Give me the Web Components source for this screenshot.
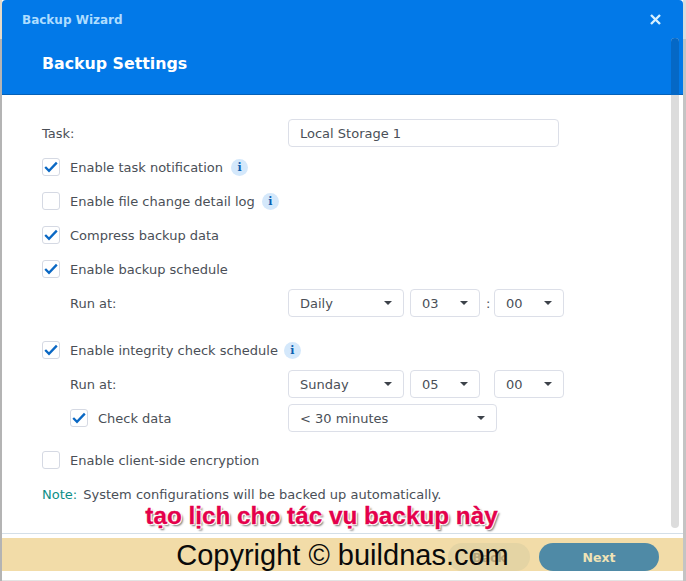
<!DOCTYPE html>
<html lang="en"><head><meta charset="utf-8"><title>Backup Wizard</title>
<style>
html,body{margin:0;padding:0;background:#fff}
body{font-family:"DejaVu Sans",sans-serif;font-size:13px;color:#4a4f57}
</style></head><body>
<template id="t-check"><style>
:host{display:flex;align-items:center;height:28px;gap:10px}
.box{width:16px;height:16px;border:1px solid #d5d9e3;border-radius:3px;background:#fff;flex:none;display:flex;align-items:center;justify-content:center}
.l{display:flex;align-items:center;white-space:pre}
svg{width:14px;height:12px;display:none}
:host([checked]) svg{display:block}
</style><span class="box"><svg viewBox="0 0 14 12"><path d="M1.2 6 5 9.8 12.8 1.6" fill="none" stroke="#0a68c4" stroke-width="2.3"/></svg></span><span class="l"><slot></slot><slot name="extra"></slot></span></template>

<template id="t-info"><style>
:host{display:inline-flex;width:17px;height:17px;border-radius:50%;background:#d4e8fb;color:#0b5fb0;align-items:center;justify-content:center;font:bold 11px "DejaVu Serif",serif}
</style>i</template>

<template id="t-select"><style>
:host{display:flex;box-sizing:border-box;align-items:center;justify-content:space-between;height:28px;border:1px solid #dcdfe8;border-radius:4px;background:#fff;padding:0 11px;font-size:13px;color:#4a4f57}
i{width:0;height:0;border:4.5px solid transparent;border-top:4.5px solid #3d424a;border-bottom:0}
</style><span><slot></slot></span><i></i></template>

<template id="t-input"><style>
:host{display:flex;box-sizing:border-box;align-items:center;height:28px;border:1px solid #dcdfe8;border-radius:4px;background:#fff;padding:0 11px;color:#4a4f57}
</style><slot></slot></template>

<template id="t-header"><style>
:host{display:block;height:95px;box-sizing:border-box;background:#0279e8;border-bottom:1px solid #0561b8;position:relative;border-radius:4px 4px 0 0}
.t{padding:13px 0 0 20px;height:26px;font-weight:bold;font-size:12px;line-height:15px;color:#aeddff}
.h{padding:15px 0 0 40px;font-weight:bold;font-size:15.8px;line-height:20px;color:#fff}
svg{position:absolute;right:22px;top:14px;width:11px;height:11px}
</style><div class="t">Backup Wizard</div><div class="h">Backup Settings</div>
<svg viewBox="0 0 11 11"><path d="M1 1 10 10M10 1 1 10" stroke="#d6f0ff" stroke-width="2.4" fill="none"/></svg></template>

<template id="t-row"><style>
:host{display:grid;grid-template-columns:246px auto;align-items:center;height:28px}
.c{display:flex;align-items:center;gap:6px}
</style><span><slot name="label"></slot></span><span class="c"><slot></slot></span></template>

<template id="t-footer"><style>
:host{display:block;height:47px;box-sizing:border-box;border-top:1px solid #d4dfe8;padding-top:4px;background:#fff}
.band{height:33px;background:#f2dca8;box-sizing:border-box;padding:5px 24px 0 0;display:flex;justify-content:flex-end;gap:9px}
.b{height:28px;border-radius:14px;display:flex;align-items:center;justify-content:center;font-size:12.5px;font-weight:bold}
.back{width:82px;background:#e4d4a4;color:#b5a67d}
.next{width:120px;background:#4f8aa6;color:#efe3b6}
</style><div class="band"><span class="b back">Back</span><span class="b next">Next</span></div></template>

<template id="t-window"><style>
:host{display:block;width:686px;height:581px;position:relative;overflow:hidden;box-sizing:border-box;padding:0 3px 1px 2px;
background:
 linear-gradient(#e6dac8 0 39px,#b4b4b4 39px) left top/2px 100% no-repeat,
 linear-gradient(#dcdcdc 0 39px,#c4c4c4 39px) right top/3px 100% no-repeat,
 linear-gradient(#e3e3e3,#e3e3e3) left bottom/100% 1px no-repeat,
 #fff}
main{height:438px;box-sizing:border-box;padding:24px 40px 0 40px;display:flex;flex-direction:column;gap:6px;background:#fff}
.scroll{position:absolute;right:7px;top:38px;width:8px;height:490px;border-radius:4px;background:#dcdcdc}
.scroll::before{content:"";display:block;height:57px;background:#0568c6;border-radius:4px 4px 0 0}
.over{position:absolute;left:0;right:0;text-align:center;font-family:"Liberation Sans",Arial,sans-serif;white-space:nowrap}
.red{top:500px;left:-43px;font-size:24.3px;font-weight:bold;line-height:32px;color:#e4004b;-webkit-text-stroke:.3px #e4004b;text-shadow:1px 1px 0 #fff,-1px -1px 0 #fff,1px -1px 0 #fff,-1px 1px 0 #fff,2px 2px 2px #777}
.copy{top:538px;left:-1px;font-size:29px;line-height:34px;color:#0a0a0a}
</style><wizard-header></wizard-header><main><slot></slot></main><wizard-footer></wizard-footer>
<div class="scroll"></div>
<div class="over red">tạo lịch cho tác vụ backup này</div>
<div class="over copy">Copyright © buildnas.com</div></template>

<wizard-window>
  <form-row><span slot="label">Task:</span><text-box style="width:271px">Local Storage 1</text-box></form-row>
  <check-row checked>Enable task notification<info-dot slot="extra" style="margin-left:8px"></info-dot></check-row>
  <check-row>Enable file change detail log<info-dot slot="extra" style="margin-left:7px"></info-dot></check-row>
  <check-row checked>Compress backup data</check-row>
  <check-row checked>Enable backup schedule</check-row>
  <form-row><span slot="label" style="padding-left:28px">Run at:</span><drop-select style="width:116px">Daily</drop-select><drop-select style="width:70px">03</drop-select><span style="width:2px">:</span><drop-select style="width:70px">00</drop-select></form-row>
  <check-row checked style="margin-top:13px">Enable integrity check schedule<info-dot slot="extra" style="margin-left:6px"></info-dot></check-row>
  <form-row><span slot="label" style="padding-left:28px">Run at:</span><drop-select style="width:116px">Sunday</drop-select><drop-select style="width:70px">05</drop-select><span style="width:2px"></span><drop-select style="width:70px">00</drop-select></form-row>
  <form-row><check-row slot="label" checked style="padding-left:28px">Check data</check-row><drop-select style="width:209px">&lt; 30 minutes</drop-select></form-row>
  <check-row style="margin-top:8px">Enable client-side encryption</check-row>
  <div style="height:28px;line-height:30px"><span style="color:#0e8f87;margin-right:2px">Note:</span> System configurations will be backed up automatically.</div>
</wizard-window>
<script>
const reg=(name,id)=>customElements.define(name,class extends HTMLElement{
  constructor(){super();this.attachShadow({mode:"open"}).appendChild(document.getElementById(id).content.cloneNode(true));}
});
reg("check-row","t-check");reg("info-dot","t-info");reg("drop-select","t-select");reg("text-box","t-input");
reg("wizard-header","t-header");reg("form-row","t-row");reg("wizard-footer","t-footer");reg("wizard-window","t-window");
</script></body></html>
